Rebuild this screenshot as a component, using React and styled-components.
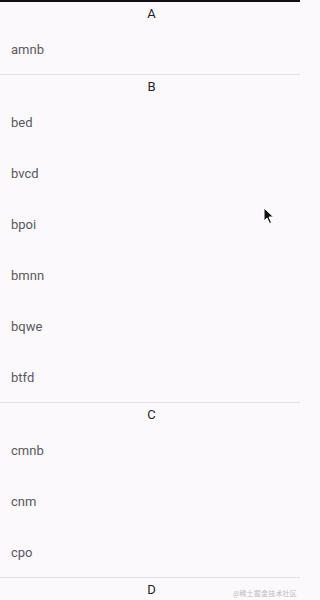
import styled, { createGlobalStyle } from "styled-components";

const GlobalStyle = createGlobalStyle`
  html, body {
    margin: 0;
    padding: 0;
    background: #fbf9fc;
  }
  body {
    font-family: Roboto, "Noto Sans", "Noto Sans CJK SC", sans-serif;
  }
`;

const data = [
  { letter: "A", names: ["amnb"] },
  { letter: "B", names: ["bed", "bvcd", "bpoi", "bmnn", "bqwe", "btfd"] },
  { letter: "C", names: ["cmnb", "cnm", "cpo"] },
  { letter: "D", names: [] },
];

const Page = styled.div`
  position: relative;
  width: 300px;
  height: 600px;
  overflow: hidden;
  background: #fbf9fc;
`;

const StatusEdge = styled.div`
  height: 2px;
  background: #111;
`;

const Section = styled.section`
  border-bottom: 1px solid #e2e0e4;

  &:last-of-type {
    border-bottom: none;
  }
`;

const Header = styled.div`
  height: 21px;
  display: flex;
  align-items: center;
  justify-content: center;
  padding-top: 1px;
  box-sizing: border-box;
  padding-left: 3px;
  font-size: 13px;
  color: #1f1f1f;
`;

const Row = styled.div`
  height: 51px;
  display: flex;
  align-items: center;
  padding-left: 11px;
  padding-top: 1px;
  box-sizing: border-box;
  font-size: 13px;
  color: #5a585d;
`;

const Watermark = styled.div`
  position: absolute;
  right: 3px;
  bottom: 2px;
  font-size: 7px;
  color: #bdbbc0;
  letter-spacing: 0.2px;
`;

const Cursor = styled.svg`
  position: absolute;
  left: 263px;
  top: 207px;
`;

const App = () => {
  return (
    <Page>
      <GlobalStyle />
      <StatusEdge />
      {data.map((group) => (
        <Section key={group.letter}>
          <Header>{group.letter}</Header>
          {group.names.map((name) => (
            <Row key={name}>{name}</Row>
          ))}
        </Section>
      ))}
      <Cursor width="12" height="18" viewBox="0 0 12 18">
        <path
          d="M1 1 L1 14 L4 11 L6.5 16.5 L8.5 15.5 L6 10 L10.5 10 Z"
          fill="#111"
          stroke="#fff"
          strokeWidth="1"
          strokeLinejoin="round"
        />
      </Cursor>
      <Watermark>@稀土掘金技术社区</Watermark>
    </Page>
  );
};

export default App;
